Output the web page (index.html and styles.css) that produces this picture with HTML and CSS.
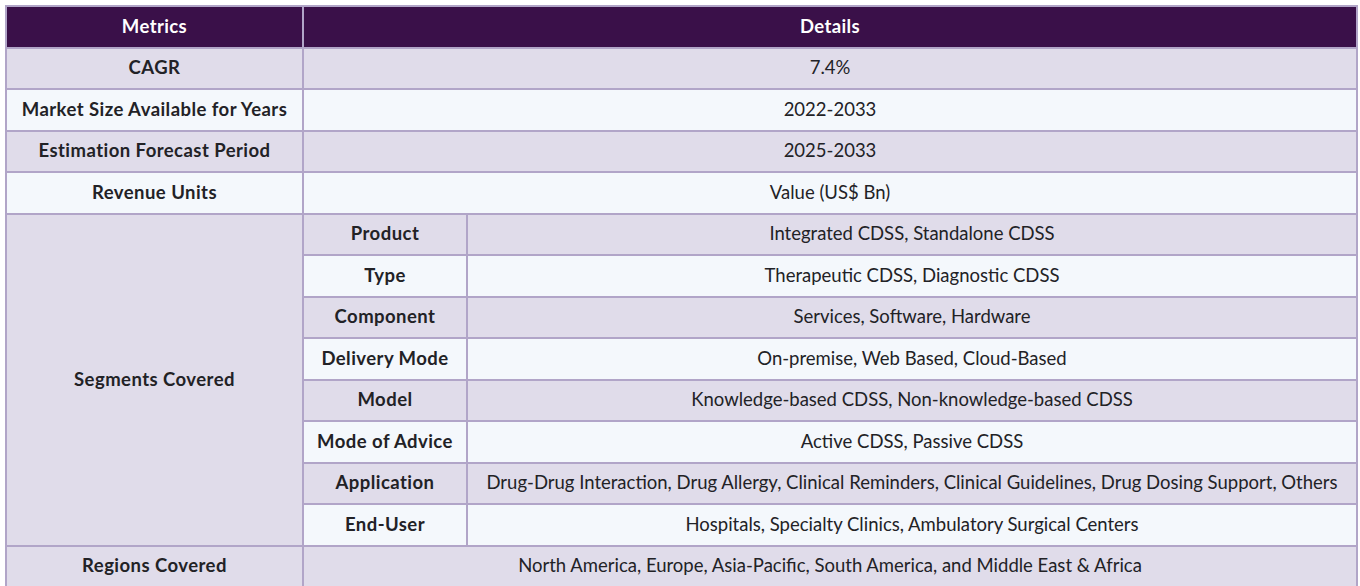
FILE: index.html
```html
<!DOCTYPE html>
<html>
<head>
<meta charset="utf-8">
<link rel="stylesheet" href="styles.css">
</head>
<body>
<table class="report">
  <colgroup>
    <col class="c1"><col class="c2"><col class="c3">
  </colgroup>
  <thead>
    <tr><th>Metrics</th><th colspan="2">Details</th></tr>
  </thead>
  <tbody>
    <tr class="odd"><td class="key">CAGR</td><td colspan="2">7.4%</td></tr>
    <tr class="even"><td class="key">Market Size Available for Years</td><td colspan="2">2022-2033</td></tr>
    <tr class="odd"><td class="key">Estimation Forecast Period</td><td colspan="2">2025-2033</td></tr>
    <tr class="even"><td class="key">Revenue Units</td><td colspan="2">Value (US$ Bn)</td></tr>
    <tr class="odd"><td class="key seg" rowspan="8">Segments Covered</td><td class="key">Product</td><td>Integrated CDSS, Standalone CDSS</td></tr>
    <tr class="even"><td class="key">Type</td><td>Therapeutic CDSS, Diagnostic CDSS</td></tr>
    <tr class="odd"><td class="key">Component</td><td>Services, Software, Hardware</td></tr>
    <tr class="even"><td class="key">Delivery Mode</td><td>On-premise, Web Based, Cloud-Based</td></tr>
    <tr class="odd"><td class="key">Model</td><td>Knowledge-based CDSS, Non-knowledge-based CDSS</td></tr>
    <tr class="even"><td class="key">Mode of Advice</td><td>Active CDSS, Passive CDSS</td></tr>
    <tr class="odd"><td class="key">Application</td><td>Drug-Drug Interaction, Drug Allergy, Clinical Reminders, Clinical Guidelines, Drug Dosing Support, Others</td></tr>
    <tr class="even"><td class="key">End-User</td><td>Hospitals, Specialty Clinics, Ambulatory Surgical Centers</td></tr>
    <tr class="odd"><td class="key">Regions Covered</td><td colspan="2">North America, Europe, Asia-Pacific, South America, and Middle East &amp; Africa</td></tr>
  </tbody>
</table>
</body>
</html>
```
FILE: styles.css
```css
html, body {
  margin: 0;
  padding: 0;
  background: #ffffff;
}
body {
  padding: 5px 0 0 5px;
  font-family: Lato, "Open Sans", sans-serif;
  color: #222226;
}
.report {
  border-collapse: collapse;
  table-layout: fixed;
  width: 1353px;
  font-size: 18.5px;
}
.c1 { width: 297px; }
.c2 { width: 164px; }
.c3 { width: 890px; }
.report th,
.report td {
  border: 2px solid #b1a5c8;
  text-align: center;
  vertical-align: middle;
  padding: 0 2px 2px;
  height: 37.5px;
  line-height: 22px;
}
.report th {
  background: #3a1049;
  color: #ffffff;
  font-weight: 700;
  letter-spacing: 0.4px;
}
.report .key {
  font-weight: 700;
  letter-spacing: 0.45px;
}
.odd td { background: #e0dcea; }
.even td { background: #f4f8fc; }
.report td.seg { background: #e0dcea; }
```
